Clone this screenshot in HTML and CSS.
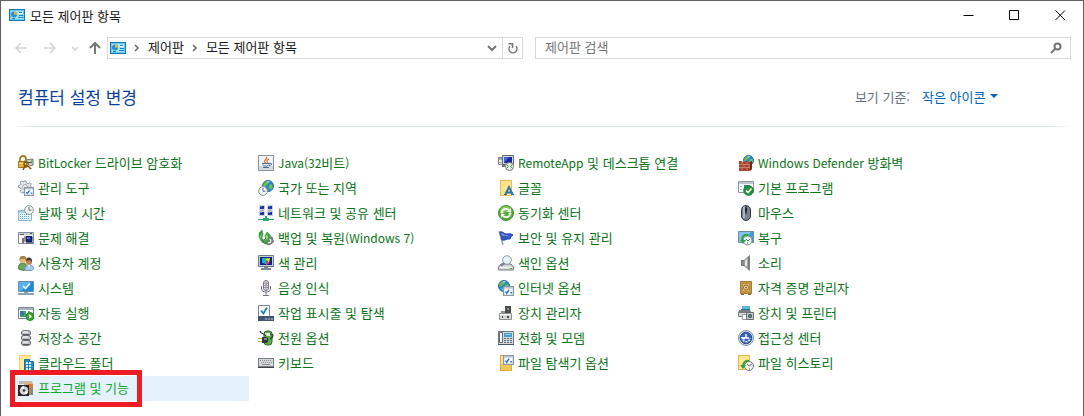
FILE: index.html
```html
<!DOCTYPE html>
<html lang="ko">
<head>
  <meta charset="UTF-8">
  <meta name="viewport" content="width=device-width, initial-scale=1.0">
  <title>모든 제어판 항목</title>
  <link rel="stylesheet" href="styles.css">
</head>
<body>
  <svg class="defs" aria-hidden="true">
    <symbol id="panel" viewBox="0 0 16 12">
      <path fill="#1478b4" d="M0 0h16v12H0z"/>
      <path fill="#6cc8ee" d="M1 1h14v10H1z"/>
      <path fill="#a4e2f8" d="M2 2h12v8H2z"/>
      <circle cx="5" cy="5.500" r="3" fill="#2a8fd0"/>
      <path fill="#f0b440" d="M5 5.500V2.500a3 3 0 0 1 3 3z"/>
      <path fill="#fff" d="M9.500 3h4v2h-4z"/>
      <path fill="#1e7fc0" d="M10 3h3v1h-3zM10 6h4v1h-4zM9 8h5v1H9zM3 9h3v1H3z"/>
    </symbol>
    <symbol id="clock" viewBox="0 0 10 10">
      <circle cx="5" cy="5" r="4.400" fill="#f2f5f6" stroke="#8b979c"/>
      <path d="M5 2v3.200h2.500" fill="none" stroke="#62727a"/>
    </symbol>
    <symbol id="globe" viewBox="0 0 12 12">
      <circle cx="6" cy="6" r="5.500" fill="#2f87cf" stroke="#2569a0"/>
      <path fill="#6cbf4a" d="M2 3l3-2 2 1-1 2-2 1-1 2-2-1zM7 5l3-1 1 3-2 3-2-2z"/>
      <path fill="#a8dcf7" d="M5 1h3L6 3zM3 8l2 1v2z"/>
    </symbol>
    <symbol id="check" viewBox="0 0 9 8">
      <path fill="#fff" stroke="#8a98a5" d="M.5.5h8v7h-8z"/>
      <path fill="#a9b7c4" d="M1 1h7v1H1z"/>
      <path fill="none" stroke="#2575c9" stroke-width="1.200" d="M2 4.500l1 1.300 2-2.800M6 5.500h1.500"/>
    </symbol>
  </svg>

  <div class="window">
    <header class="titlebar">
      <svg class="panel-icon"><use href="#panel"/></svg>
      <span class="title">모든 제어판 항목</span>
      <div class="window-buttons">
        <button type="button" aria-label="최소화"><svg viewBox="0 0 11 11"><path d="M.5 5.500h10"/></svg></button>
        <button type="button" aria-label="최대화"><svg viewBox="0 0 11 11"><path d="M.5.5h9v9h-9z"/></svg></button>
        <button type="button" aria-label="닫기"><svg viewBox="0 0 11 11"><path d="M.5.5l9.500 9.500M10 .5L.5 10"/></svg></button>
      </div>
    </header>

    <div class="toolbar">
      <nav class="history">
        <button type="button" class="back" aria-label="뒤로" disabled><svg viewBox="0 0 14 14"><path d="M13 7H2M7 2L2 7l5 5"/></svg></button>
        <button type="button" class="forward" aria-label="앞으로" disabled><svg viewBox="0 0 14 14"><path d="M1 7h11M7 2l5 5-5 5"/></svg></button>
        <button type="button" class="recent" aria-label="최근 위치" disabled><svg viewBox="0 0 14 14"><path d="M4 6l3 3 3-3"/></svg></button>
        <button type="button" class="up" aria-label="위로"><svg viewBox="0 0 14 14"><path d="M7 13V2M2 7l5-5 5 5"/></svg></button>
      </nav>
      <div class="address">
        <svg class="panel-icon"><use href="#panel"/></svg>
        <svg class="chevron" viewBox="0 0 6 8"><path d="M1 1l3 3-3 3"/></svg>
        <a href="#">제어판</a>
        <svg class="chevron" viewBox="0 0 6 8"><path d="M1 1l3 3-3 3"/></svg>
        <a href="#">모든 제어판 항목</a>
        <button type="button" class="drop" aria-label="이전 위치"><svg viewBox="0 0 12 12"><path d="M2 4l4 4 4-4"/></svg></button>
        <button type="button" class="refresh" aria-label="새로 고침"><svg viewBox="0 0 12 12"><path d="M9 4.200A4 4 0 1 1 3 4.200M1.500 1.800H5.500V6"/></svg></button>
      </div>
      <form class="search">
        <input type="search" placeholder="제어판 검색" aria-label="제어판 검색">
        <button type="button" aria-label="검색"><svg viewBox="0 0 12 12"><circle cx="7.500" cy="4.500" r="3"/><path d="M5.500 6.500l-4.500 4.500"/></svg></button>
      </form>
    </div>

    <div class="heading">
      <h1>컴퓨터 설정 변경</h1>
      <div class="view-by">
        <label for="view">보기 기준:</label>
        <select id="view">
          <option>작은 아이콘</option>
        </select>
        <svg class="caret" viewBox="0 0 8 4"><path d="M0 0h8L4 4z"/></svg>
      </div>
    </div>

    <main class="items">
      <ul>
        <li><a href="#">
          <svg viewBox="0 0 16 16"><path fill="#c9cdd0" stroke="#777" d="M7 5l8-1v6l-7 2z"/><path fill="#4f575b" d="M9 7h5v1H9z"/><circle cx="14" cy="6" r="1" fill="#58b957"/><path fill="none" stroke="#a47920" stroke-width="1.800" d="M2 6V4a3 3 0 0 1 6 0v2"/><path fill="#e8b435" stroke="#a6721c" d="M.5 6.500h8v6h-8z"/><path fill="#ffe18a" d="M1 8h7v1H1z"/><circle cx="8" cy="9" r="2" fill="none" stroke="#76501f" stroke-width="1.500"/><path stroke="#76501f" stroke-width="1.500" d="M7 11l-2 4M9 10l4 4"/><path stroke="#d8a64b" d="M9 9l5 5"/></svg>
          <span><span class="latin">BitLocker</span> 드라이브 암호화</span></a></li>
        <li><a href="#">
          <svg viewBox="0 0 16 16"><path fill="#e6e9eb" stroke="#959ca1" d="M6 1h2l.5 2 1.500.6 2-1 1.300 1.300-1 2L13 7l2 .6v2L12 11l-3 3H6l-.5-2-2 .8L2 11.500l1-2L2.500 8 .5 7.500v-2l2-.5.5-1-1-2 1.500-1 2 1z"/><circle cx="7" cy="7" r="2.500" fill="#fff" stroke="#989ea3"/><use href="#check" x="6" y="7" width="10" height="9"/></svg>
          관리 도구</a></li>
        <li><a href="#">
          <svg viewBox="0 0 16 16"><path fill="#e8f6fa" stroke="#86b6c7" d="M.5 5.500h13v10H.5z"/><path fill="#a8d1df" d="M1 6h12v2H1z"/><path stroke="#5cabc6" stroke-dasharray="1 1" d="M2 9.500h10M2 11.500h10M2 13.500h10"/><use href="#clock" x="6" y="0" width="10" height="10"/></svg>
          날짜 및 시간</a></li>
        <li><a href="#">
          <svg viewBox="0 0 16 16"><path fill="#f5f7f9" stroke="#808c99" d="M.5 2.500h15v11H.5z"/><path fill="#c8d0d8" d="M1 3h14v2H1z"/><path fill="#4c5966" d="M2 4h4v1H2zM12 3h2v1h-2z"/><path fill="#172b9c" stroke="#0d1750" d="M8 6.500h6v5H8z"/><path fill="#506ddb" d="M9 7h3v2H9z"/><path fill="#697383" d="M4 8h2v5H4zM8 12h7v2H8z"/><path fill="#dc8c34" d="M6 6h1v6H6z"/></svg>
          문제 해결</a></li>
        <li><a href="#">
          <svg viewBox="0 0 16 16"><path fill="#68a65c" stroke="#477a42" d="M.5 14c0-4 1-6 4-6s5 2 5 6l-4 1.500z"/><circle cx="5" cy="5" r="3.200" fill="#e5b77c"/><path fill="#a5793f" d="M1.500 6C1 2 3 1 5 1s4 1 3.500 4L6 3.500 3 4z"/><path fill="#a3c8e8" stroke="#7898bd" d="M7 15c0-3 1-5 4-5s4.500 1 4.500 4l-2 1.500H8z"/><circle cx="11" cy="7" r="3" fill="#c18458"/><path fill="#4b3a33" d="M8 6c0-2 1-3.500 3-3.500S14.500 4 14 7l-2-2z"/><path fill="#fff" d="M10 10h2l-1 3z"/></svg>
          사용자 계정</a></li>
        <li><a href="#">
          <svg viewBox="0 0 16 16"><path fill="#e6eef4" stroke="#6c8da8" d="M.5 1.500h15v10H.5z"/><path fill="#168bdd" d="M1 2h14v9H1z"/><path fill="#55b4ef" d="M1 2h12L3 11H1z"/><path fill="none" stroke="#fff" stroke-width="1.700" d="M5 6l2.500 2.500L12 3.500"/><path fill="#8ba2b2" d="M6 12h4v1H6zM0 13h16v2H0z"/></svg>
          시스템</a></li>
        <li><a href="#">
          <svg viewBox="0 0 16 16"><path fill="#fff" stroke="#758590" d="M.5 2.500h15v11H.5z"/><path fill="#a9b5be" d="M1 3h14v2H1z"/><path fill="#4a9b72" d="M2 6h6v6H2z"/><path fill="#327e93" d="M2 6h4v5H2z"/><path fill="#8ca0aa" d="M10 6h2v4h-2z"/><circle cx="12" cy="11.500" r="4" fill="#35a832" stroke="#23842c"/><path fill="#fff" d="M11 9l3 2.500-3 2.500z"/></svg>
          자동 실행</a></li>
        <li><a href="#">
          <svg viewBox="0 0 16 16"><path fill="#bfc3c8" stroke="#686c71" d="M3.500 2c0-2 9-2 9 0v2c0 2-9 2-9 0zM3.500 7c0-1 1-1.500 2-1.500h5c1 0 2 .5 2 1.500v2c0 2-9 2-9 0zM3.500 12c0-1 1-1.500 2-1.500h5c1 0 2 .5 2 1.500v2c0 2-9 2-9 0z"/><path stroke="#fff" d="M5 2h5M5 7h5M5 12h5"/><path stroke="#55595e" d="M5 4.500h6M5 9.500h6M5 14.500h6"/></svg>
          저장소 공간</a></li>
        <li><a href="#">
          <svg viewBox="0 0 16 16"><path fill="#f3cf68" d="M1 0h12v16H1z"/><path fill="#ffe9a0" d="M2 1h11v14H2z"/><path fill="#2889c5" stroke="#1c70a5" d="M6.500 4.500h5v2h4v9h-9z"/><path fill="#d8f2ff" d="M8 7h2v2H8zM11 7h2v2h-2zM8 10h2v2H8zM11 10h2v2h-2zM8 13h2v2H8zM11 13h2v2h-2z"/></svg>
          클라우드 폴더</a></li>
        <li class="selected"><a href="#">
          <svg viewBox="0 0 16 16"><path fill="#b8bdc0" d="M1 1h13l1 3H1z"/><path fill="#deb385" d="M6 2h8v3H6z"/><path fill="#dc7d45" d="M10 4h5v11h-5z"/><path fill="#889069" d="M12 8h3v7h-3z"/><path fill="#242424" d="M0 5h11v11H0z"/><circle cx="6" cy="10.500" r="4.300" fill="#d7dadd"/><path fill="#fff" d="M6 10.500L3 7l3-1zM6 10.500l4 2-2 2z"/><circle cx="6" cy="10.500" r="1.300" fill="#333"/></svg>
          프로그램 및 기능</a></li>
      </ul>

      <ul>
        <li><a href="#">
          <svg viewBox="0 0 16 16"><path fill="#f1f3f6" stroke="#8695a5" d="M.5.5h15v15H.5z"/><path fill="#d2d9e1" d="M1 11h14v4H1z"/><path fill="none" stroke="#e27934" stroke-width="1.300" d="M8 2c3 2-4 3-.5 6M11 4c-2 1-3 2-1 4"/><path fill="none" stroke="#416c94" d="M4 8.500h7c4-1 3 2 0 2M5 9.500c0 2 5 2 6 0M5 12.500h6"/></svg>
          <span><span class="latin">Java(32</span>비트<span class="latin">)</span></span></a></li>
        <li><a href="#">
          <svg viewBox="0 0 16 16"><use href="#globe" x="4" y="0" width="12" height="12"/><use href="#clock" x="0" y="6" width="10" height="10"/></svg>
          국가 또는 지역</a></li>
        <li><a href="#">
          <svg viewBox="0 0 16 16"><path fill="#cbd1df" d="M1 0h6v5H1zM9 0h6v5H9zM1 6h6v5H1zM9 6h6v5H9z"/><path fill="#2032a0" d="M2 1h4v3H2zM10 1h4v3h-4zM2 7h4v3H2zM10 7h4v3h-4z"/><path fill="#5471d9" d="M2 1h2v1H2zM10 1h2v1h-2zM2 7h2v1H2zM10 7h2v1h-2z"/><path fill="#a3abb8" d="M2 5h4v1H2zM10 5h4v1h-4z"/><path fill="#32a76b" d="M7 11h2v2h2v1h5v1H0v-1h5v-1h2zM5 13h6v3H5z"/></svg>
          네트워크 및 공유 센터</a></li>
        <li><a href="#">
          <svg viewBox="0 0 16 16"><path fill="#9a9fa2" stroke="#666" d="M8 8l6-1 1.500 5L11 15l-7-3z"/><circle cx="11" cy="11" r="3" fill="#e7e7e4" stroke="#73777a"/><circle cx="11" cy="11" r="1" fill="#a4563e"/><path fill="#33a43a" stroke="#2a8838" stroke-width=".5" d="M1 3l3-3 1 4-1 4 4 5v-4L7 6l2-4 4 4-2 1v4l-3 3-5-3-2-4z"/><path fill="#a7e69c" d="M4 3l-1 4 1 3-2-3zM9 4l1 3-1 4-1-4z"/></svg>
          <span>백업 및 복원<span class="latin">(Windows 7)</span></span></a></li>
        <li><a href="#">
          <svg viewBox="0 0 16 16"><path fill="#c6ced6" stroke="#707d89" d="M.5.5h15v11H.5z"/><path fill="#0f238c" d="M2 2h12v8H2z"/><path fill="#16b2d6" d="M4 3h4v6l-4-1z"/><path fill="#4ec344" d="M6 3h5L8 7z"/><path fill="#f3dd33" d="M8 4l4-1-1 5z"/><path fill="#df3f6b" d="M8 6l4 2-4 2z"/><path fill="#7b8792" d="M6 12h4v1H6zM3 13h10v2H3z"/></svg>
          색 관리</a></li>
        <li><a href="#">
          <svg viewBox="0 0 16 16"><rect x="5.500" y=".5" width="5" height="10" rx="2.500" fill="#e9e7f0" stroke="#777086"/><path stroke="#9992a7" d="M6 3.500h4M6 5.500h4M6 7.500h4M8 1v9"/><path fill="none" stroke="#777086" d="M3.500 6v3c0 4 9 4 9 0V6M8 12v3M5 15.500h6"/></svg>
          음성 인식</a></li>
        <li><a href="#">
          <svg viewBox="0 0 16 16"><path fill="#fff" stroke="#788797" d="M.5.5h11v11H.5z"/><path fill="none" stroke="#217dc3" stroke-width="1.800" d="M3 5.500l2.500 3L9 2.500"/><path fill="#44546e" d="M0 11h16v5H0z"/><path fill="#8397b2" d="M7 13h2v2H7zM10 13h2v2h-2zM13 13h2v2h-2z"/></svg>
          작업 표시줄 및 탐색</a></li>
        <li><a href="#">
          <svg viewBox="0 0 16 16"><rect x="6" y="1" width="8" height="14" rx="3" fill="#54ae43" stroke="#48604a"/><path fill="#dcefd0" d="M7 3h5v3H7z"/><path fill="none" stroke="#343b3e" stroke-width="1.200" d="M2 1c1 4 5 2 6 5M12 9c4-2 4-5 0-5"/><path fill="#303536" d="M4 7h4c3 0 3 6 0 6H4z"/><path fill="#d9ac32" d="M0 8h4v1H0zM0 11h4v1H0z"/><path stroke="#d1d6d7" d="M6 9h3"/></svg>
          전원 옵션</a></li>
        <li><a href="#">
          <svg viewBox="0 0 16 16"><path fill="#7b7f85" d="M0 3h16v10H0z"/><path fill="#d5d8db" d="M1 4h14v7H1z"/><path stroke="#8b9096" stroke-dasharray="1 1" d="M2 5.500h12M3 7.500h11"/><path stroke="#888c90" d="M4 9.500h8"/><path fill="#414349" d="M0 12h16v1H0z"/></svg>
          키보드</a></li>
      </ul>

      <ul>
        <li><a href="#">
          <svg viewBox="0 0 16 16"><path fill="#e4e8ef" stroke="#7c879b" d="M.5 2.500h8v7h-8z"/><path fill="#9fabc1" d="M1 3h4v2H1zM1 7h4v1H1z"/><path fill="#d5dae1" stroke="#606b7a" d="M4.500.5h11v9h-11z"/><path fill="#18299e" d="M6 2h8v6H6z"/><path fill="#4265d1" d="M6 2h5L7 7H6z"/><circle cx="11.500" cy="11.500" r="4" fill="#e9eee5" stroke="#747b70"/><path fill="none" stroke="#2f963d" d="M9 10l1.500 1.500L9 13M14 10l-1.500 1.500L14 13"/><path stroke="#6c7582" stroke-width="2" d="M4 11h3"/></svg>
          <span><span class="latin">RemoteApp</span> 및 데스크톱 연결</span></a></li>
        <li><a href="#">
          <svg viewBox="0 0 16 16"><path fill="#e9bd55" d="M2 0h12v16H2z"/><path fill="#ffe38d" d="M3 1h10v14H3z"/><path fill="none" stroke="#2273b1" stroke-width="1.800" d="M7 15l4-8 4 8M8 12.500h5"/><path fill="#2273b1" d="M6 14h3v1H6zM13 14h3v1h-3z"/></svg>
          글꼴</a></li>
        <li><a href="#">
          <svg viewBox="0 0 16 16"><circle cx="8" cy="8" r="7.500" fill="#57a93a" stroke="#3a912c"/><path fill="#86cb57" d="M2 7a6 6 0 0 1 12 0z"/><path fill="none" stroke="#fff" stroke-width="1.700" d="M4 7c0-3 4-4 7-2M12 9c0 3-4 4-7 2"/><path fill="#fff" d="M9 7h4V3zM7 9H3v4zM2 7h4L4 9zM10 9h4l-2-2z"/></svg>
          동기화 센터</a></li>
        <li><a href="#">
          <svg viewBox="0 0 16 16"><path stroke="#8e949c" stroke-width="1.300" d="M1 1l4 14"/><path fill="#3058c0" stroke="#2644a4" d="M2 2c3-1 4 2 6 2 3 0 4-1 7 1-2 1-2 2-3 4-3-1-4 2-8 1z"/><path fill="#7494e2" d="M3 3c2 0 3 2 5 2l4 1c-4 1-6-1-8 0z"/></svg>
          보안 및 유지 관리</a></li>
        <li><a href="#">
          <svg viewBox="0 0 16 16"><path fill="#d4d7d9" stroke="#757b7f" d="M3 9h10l2.500 3v3H.5v-3z"/><path fill="#fff" d="M2 12h12v1H2z"/><path fill="#43ad40" d="M12 13h2v1h-2z"/><circle cx="9" cy="5" r="4.300" fill="#e5f0f9" stroke="#8c9dac"/><path stroke="#79838b" stroke-width="2" d="M6 8l-3 3"/><path fill="none" stroke="#fff" d="M7 5c0-2 1-2 2-2"/></svg>
          색인 옵션</a></li>
        <li><a href="#">
          <svg viewBox="0 0 16 16"><use href="#globe" x="0" y="0" width="12" height="12"/><use href="#check" x="5" y="6" width="11" height="10"/></svg>
          인터넷 옵션</a></li>
        <li><a href="#">
          <svg viewBox="0 0 16 16"><path fill="#4b4e50" d="M7 1h6v7H7z"/><path fill="#888c8e" d="M9 3h2v2H9z"/><path fill="#d7d8d8" stroke="#8c8e8f" d="M1.500 8.500h12v6h-12z"/><path fill="#fff" d="M2 9h11v1H2z"/><path fill="#464849" d="M4 11h1v2H4zM9 11h2v2H9z"/><path fill="#8f9191" d="M3 6h4v2H3z"/></svg>
          장치 관리자</a></li>
        <li><a href="#">
          <svg viewBox="0 0 16 16"><path fill="#d6dadf" stroke="#737b86" d="M.5 1.500h15v13H.5z"/><path fill="#fff" stroke="#606f80" d="M1.500 2.500h3v10h-3z"/><path fill="#3e9ed0" d="M6 3h8v4H6z"/><path fill="#8bd1ef" d="M7 4h6v1H7z"/><path stroke="#5b6775" stroke-dasharray="2 1" d="M6 8.500h8M6 10.500h8M6 12.500h8"/><path fill="#4b5967" d="M0 14h16v1H0z"/></svg>
          전화 및 모뎀</a></li>
        <li><a href="#">
          <svg viewBox="0 0 16 16"><path fill="#dda93e" d="M2 0h12v16H2z"/><path fill="#ffe28a" d="M3 1h10v14H3z"/><path fill="#f4c85a" d="M3 9h10v6H3z"/><use href="#check" x="5" y="0" width="11" height="10"/></svg>
          파일 탐색기 옵션</a></li>
      </ul>

      <ul>
        <li><a href="#">
          <svg viewBox="0 0 16 16"><use href="#globe" x="5" y="0" width="11" height="11"/><path fill="#a6432f" d="M1 6h3v1h3V6h3v1h3v8l-2 1H1z"/><path stroke="#cf7d62" d="M1 9.500h12M1 12.500h12M4 7v2M9 7v2M6 10v2M11 10v2M4 13v2M9 13v2"/><path fill="#6e2920" d="M12 7l2-1v8l-2 2z"/></svg>
          <span><span class="latin">Windows Defender</span> 방화벽</span></a></li>
        <li><a href="#">
          <svg viewBox="0 0 16 16"><path fill="#f8fafb" stroke="#8d9aa6" d="M.5 1.500h15v11H.5z"/><path fill="#bfc8d0" d="M1 2h14v2H1z"/><path fill="#9eb0c1" d="M2 6h2v1H2zM2 9h2v1H2z"/><path fill="#2b87cc" d="M6 5h6v5H6z"/><circle cx="10.500" cy="10.500" r="4.800" fill="#24943b" stroke="#187a2b"/><path fill="none" stroke="#fff" stroke-width="1.600" d="M8 10.500l2 2 3.500-4"/></svg>
          기본 프로그램</a></li>
        <li><a href="#">
          <svg viewBox="0 0 16 16"><rect x="3.500" y=".5" width="9" height="15" rx="4.500" fill="#77808b" stroke="#343b45"/><path fill="#adb6c0" d="M5 3c0-1 1-2 2-2v12H5z"/><path stroke="#353e48" stroke-width="1.500" d="M8 1v8"/><rect x="7" y="3" width="2" height="4" rx="1" fill="#1d242b"/></svg>
          마우스</a></li>
        <li><a href="#">
          <svg viewBox="0 0 16 16"><path fill="#3c9ddb" stroke="#6d8ca2" d="M.5 1.500h15v11H.5z"/><path fill="#7fc6ee" d="M1 2h12L4 12H1z"/><circle cx="9.500" cy="10.500" r="4.500" fill="#edf2ee" stroke="#788e87"/><path fill="none" stroke="#36a342" stroke-width="2" d="M10 5c-5-1-7 3-5 7"/><path fill="#36a342" d="M2 10h6l-3 4z"/><path fill="none" stroke="#5c6b69" d="M8 9l2 2 2-2M9 13h1"/></svg>
          복구</a></li>
        <li><a href="#">
          <svg viewBox="0 0 16 16"><path fill="#8d9193" stroke="#686d70" d="M3.500 5.500h3v5h-3z"/><path fill="#a6aaac" stroke="#8b8f92" d="M6 5.500L11.500.5v15L6 10.500z"/><path fill="#7a7e80" d="M10 2h2v12h-2z"/><path fill="#e5e7e8" d="M7 6l2-2v7H7z"/></svg>
          소리</a></li>
        <li><a href="#">
          <svg viewBox="0 0 16 16"><path fill="#c99a43" stroke="#a67a36" d="M2.500 1.500h11v12h-11z"/><path fill="#8e6221" d="M3 14h3v1H3zM10 14h3v1h-3z"/><path fill="#e2bf70" stroke="#b58b43" d="M4.500 3.500h7v8h-7z"/><circle cx="8" cy="7.500" r="2.500" fill="#f3e2af" stroke="#89632a"/><circle cx="8" cy="7.500" r="1" fill="#8d682e"/></svg>
          자격 증명 관리자</a></li>
        <li><a href="#">
          <svg viewBox="0 0 16 16"><path fill="#60b6d4" d="M4 1h8v4H4z"/><path fill="#277a9c" d="M3 4h9v1H3z"/><path fill="#777d83" d="M1 5h11l2 3H0z"/><path fill="#d7dadd" stroke="#757c82" d="M.5 7.500h9v4h-9z"/><path fill="#fff" stroke="#93999e" d="M4.500 9.500h5v5h-5z"/><path fill="#c7cbce" stroke="#686f74" d="M8.500 7.500h7v7h-7z"/><circle cx="12" cy="11" r="2" fill="#37454d"/><circle cx="12" cy="11" r="1" fill="#5d9b8a"/></svg>
          장치 및 프린터</a></li>
        <li><a href="#">
          <svg viewBox="0 0 16 16"><circle cx="8" cy="8" r="7.500" fill="#dce4f0" stroke="#8592a8"/><circle cx="8" cy="8" r="5.800" fill="#3563bd" stroke="#2a4fa0"/><path fill="none" stroke="#fff" stroke-width="1.500" d="M8 4v4h3"/><path fill="none" stroke="#e8f1ff" stroke-width="1.500" stroke-dasharray="2 1" d="M4 7c0 6 8 6 8 1"/><path fill="#fff" d="M3 7h5L6 10z"/></svg>
          접근성 센터</a></li>
        <li><a href="#">
          <svg viewBox="0 0 16 16"><path fill="#e4b650" d="M0 0h12v15H0z"/><path fill="#ffe794" d="M1 1h10v13H1z"/><circle cx="11" cy="11" r="4.500" fill="#edf0ed" stroke="#737c7a"/><path fill="none" stroke="#36a140" stroke-width="2" d="M11 6c-4-1-6 2-6 6"/><path fill="#36a140" d="M2 10h6l-3 4z"/><path fill="none" stroke="#68716f" d="M9 9l2 2 3-2M11 14h1"/></svg>
          파일 히스토리</a></li>
      </ul>
    </main>
  </div>
</body>
</html>
```
FILE: styles.css
```css
*, *::after {
  box-sizing: border-box;
}
body {
  margin: 0;
  background: #fff;
  color: #1a1a1a;
  font-family: "Noto Sans CJK KR", sans-serif;
  font-size: 13px;
}
button, input, select {
  font: inherit;
  border: 0;
  padding: 0;
  background: none;
}
button {
  display: flex;
  align-items: center;
  justify-content: center;
}
a {
  color: inherit;
  text-decoration: none;
}
svg {
  flex: none;
}
.defs {
  display: none;
}
.latin {
  font-size: 12px;
}
.window {
  min-height: 100vh;
  border: 1px solid #5f6164;
  border-bottom: 0;
}

/* title bar */
.titlebar {
  display: flex;
  align-items: center;
  height: 28px;
  padding-left: 8px;
}
.panel-icon {
  width: 16px;
  height: 12px;
}
.title {
  margin-left: 5px;
}
.window-buttons {
  display: flex;
  margin-left: auto;
}
.window-buttons button {
  width: 46px;
  height: 28px;
}
.window-buttons svg {
  width: 11px;
  height: 11px;
  fill: none;
  stroke: #000;
}

/* navigation, address and search */
.toolbar {
  display: flex;
  align-items: center;
  padding: 8px 12px 0 9px;
}
.history {
  display: flex;
  align-items: center;
  width: 97px;
}
.history button {
  height: 22px;
}
.history .back {
  width: 22px;
}
.history .forward {
  width: 36px;
}
.history .recent {
  width: 14px;
}
.history .up {
  width: 25px;
}
.history svg {
  width: 14px;
  height: 14px;
  fill: none;
  stroke: #d3d3d3;
  stroke-width: 1.5;
}
.history .up svg {
  stroke: #747474;
  stroke-width: 2;
}
.address {
  display: flex;
  align-items: center;
  flex: 412;
  height: 22px;
  padding-left: 2px;
  border: 1px solid #d9d9d9;
}
.address a {
  line-height: 18px;
  padding-bottom: 2px;
}
.chevron {
  width: 6px;
  height: 8px;
  margin: 0 8px;
  fill: none;
  stroke: #666;
  stroke-width: 1.5;
}
.address button {
  width: 20px;
  height: 20px;
}
.address button svg {
  width: 12px;
  height: 12px;
  fill: none;
  stroke: #747474;
  stroke-width: 2;
}
.address .drop {
  margin-left: auto;
}
.address .refresh {
  border-left: 1px solid #d9d9d9;
}
.address .refresh svg {
  stroke-width: 1.5;
}
.search {
  display: flex;
  align-items: center;
  flex: 525;
  height: 22px;
  margin-left: 12px;
  padding-left: 9px;
  border: 1px solid #d9d9d9;
}
.search input {
  flex: 1;
  min-width: 0;
  height: 20px;
  padding-bottom: 3px;
  outline: 0;
}
.search input::placeholder {
  color: #757575;
}
.search button {
  width: 28px;
  height: 20px;
}
.search svg {
  width: 12px;
  height: 12px;
  fill: none;
  stroke: #747474;
  stroke-width: 2;
}

/* page heading */
.heading {
  display: flex;
  align-items: center;
  justify-content: space-between;
  height: 68px;
  margin: 0 12px;
  padding: 7px 73px 0 5px;
  border-bottom: 1px solid;
  border-image: linear-gradient(to right, #fff, #d9e3ec 2%, #d9e3ec 98%, #fff) 1;
}
h1 {
  margin: 0;
  color: #0b3f9c;
  font-size: 17px;
  font-weight: 400;
}
.view-by {
  display: flex;
  align-items: center;
}
.view-by label {
  margin-right: 12px;
  color: #68727f;
}
.view-by select {
  appearance: none;
  color: #0066bb;
}
.caret {
  width: 8px;
  height: 4px;
  margin-left: 5px;
  fill: #0066bb;
}

/* control panel items */
.items {
  display: grid;
  grid-template-columns: repeat(4, 232px);
  gap: 8px;
  padding: 24px 16px 15px;
}
.items ul {
  margin: 0;
  padding: 0;
  list-style: none;
}
.items a {
  display: flex;
  align-items: center;
  gap: 4px;
  height: 25px;
  padding: 0 0 2px 1px;
  color: #0c7318;
  white-space: nowrap;
}
.items svg {
  width: 16px;
  height: 16px;
}
.items .selected {
  position: relative;
  background: #e5f2fe;
}
.items .selected a {
  color: #10a82c;
}
.items .selected::after {
  content: "";
  position: absolute;
  top: -6px;
  left: -7px;
  width: 132px;
  height: 37px;
  border: 5px solid #ed1c24;
}
```
